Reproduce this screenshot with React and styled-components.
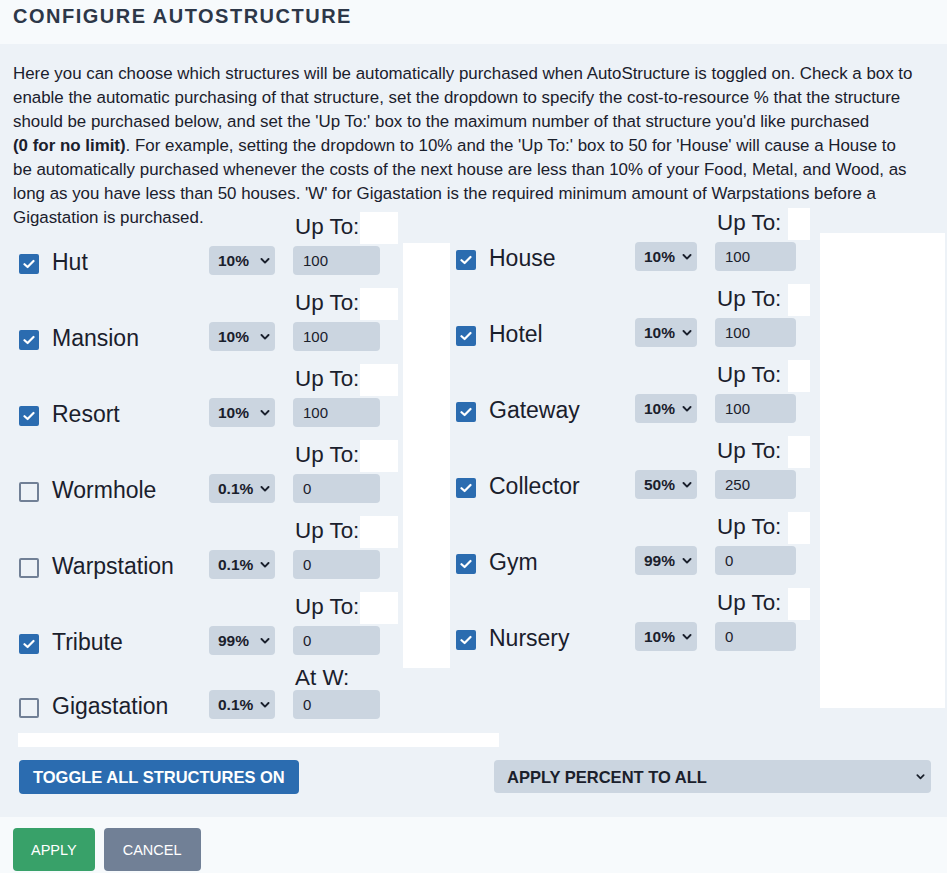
import styled, { createGlobalStyle } from "styled-components";

const GlobalStyle = createGlobalStyle`
  body {
    margin: 0;
    background: #edf2f7;
    font-family: "Liberation Sans", Arial, sans-serif;
    color: #1a202c;
  }
`;

const PERCENTS = ["0.1%", "1%", "5%", "10%", "25%", "50%", "99%"];

const LEFT = { width: 390, name: 157, select: 66, limit: 87, patchGap: 1, patchW: 38, shift: 0 };
const RIGHT = { width: 370, name: 146, select: 62, limit: 81, patchGap: 7, patchW: 22, shift: -4 };

const leftItems = [
  { name: "Hut", on: true, pct: "10%", max: "100" },
  { name: "Mansion", on: true, pct: "10%", max: "100" },
  { name: "Resort", on: true, pct: "10%", max: "100" },
  { name: "Wormhole", on: false, pct: "0.1%", max: "0" },
  { name: "Warpstation", on: false, pct: "0.1%", max: "0" },
  { name: "Tribute", on: true, pct: "99%", max: "0" },
  { name: "Gigastation", on: false, pct: "0.1%", max: "0", label: "At W:", compact: true },
];

const rightItems = [
  { name: "House", on: true, pct: "10%", max: "100" },
  { name: "Hotel", on: true, pct: "10%", max: "100" },
  { name: "Gateway", on: true, pct: "10%", max: "100" },
  { name: "Collector", on: true, pct: "50%", max: "250" },
  { name: "Gym", on: true, pct: "99%", max: "0" },
  { name: "Nursery", on: true, pct: "10%", max: "0" },
];

const Modal = styled.div`
  width: 947px;
`;

const Header = styled.h2`
  margin: 0;
  height: 44px;
  box-sizing: border-box;
  padding: 6px 13px 0;
  background: #f7fafc;
  color: #2d3748;
  font-size: 20px;
  line-height: 20px;
  font-weight: 700;
  letter-spacing: 1.5px;
  text-transform: uppercase;
`;

const Body = styled.div`
  background: #edf2f7;
  padding: 18px 2px 23px 13px;
`;

const Intro = styled.p`
  margin: 0;
  font-size: 16.9px;
  line-height: 24px;
  white-space: nowrap;
`;

const Grid = styled.div`
  display: flex;
  align-items: flex-start;
  margin-top: -18px;
`;

const Column = styled.div`
  display: flex;
  flex-direction: column;
  gap: 13px;
  flex-shrink: 0;
  box-sizing: border-box;
  width: ${({ $cfg }) => $cfg.width}px;
  padding-left: 6px;
  margin-top: ${({ $cfg }) => $cfg.shift}px;
`;

const Gutter = styled.div`
  flex-shrink: 0;
  width: 47px;
  height: 425px;
  margin-top: 31px;
  background: #fff;
`;

const BlankPane = styled.div`
  flex-shrink: 0;
  width: 125px;
  height: 475px;
  margin-top: 21px;
  background: #fff;
`;

const Item = styled.div`
  display: flex;
  align-items: flex-end;
  flex-shrink: 0;
  height: ${({ $compact }) => ($compact ? 53 : 63)}px;
  margin-top: ${({ $compact }) => ($compact ? -2 : 0)}px;
`;

const Lead = styled.label`
  display: flex;
  align-items: center;
  flex-shrink: 0;
  height: 29px;
  width: ${({ $w }) => $w + 33}px;
`;

const Box = styled.span`
  display: flex;
  align-items: center;
  justify-content: center;
  flex-shrink: 0;
  box-sizing: border-box;
  width: 20px;
  height: 20px;
  margin: 6px 13px 0 0;
  border-radius: 2px;
  background: ${({ $on }) => ($on ? "#2b6cb0" : "transparent")};
  border: 2px solid ${({ $on }) => ($on ? "#2b6cb0" : "#718096")};
`;

const Name = styled.span`
  padding-top: 3px;
  font-size: 23px;
  line-height: 29px;
  white-space: nowrap;
`;

const SelectWrap = styled.div`
  position: relative;
  flex-shrink: 0;
  width: ${({ $w }) => $w}px;
  height: ${({ $h }) => $h || 29}px;
  margin-right: ${({ $gap }) => $gap ?? 18}px;
`;

const Select = styled.select`
  appearance: none;
  width: 100%;
  height: 100%;
  box-sizing: border-box;
  border: none;
  border-radius: 4px;
  background: #cbd5e0;
  color: #1a202c;
  font-family: "Liberation Sans", Arial, sans-serif;
  font-size: ${({ $size }) => $size || 15.5}px;
  font-weight: 700;
  padding: 0 0 0 ${({ $pad }) => $pad || 9}px;
  outline: none;
`;

const Chevron = styled.svg`
  position: absolute;
  right: ${({ $right }) => $right || 5}px;
  top: 50%;
  margin-top: -3px;
  pointer-events: none;
`;

const Limit = styled.div`
  display: flex;
  flex-direction: column;
  flex-shrink: 0;
  width: ${({ $w }) => $w}px;
`;

const LimitHead = styled.div`
  display: flex;
  align-items: flex-start;
  flex-shrink: 0;
  height: ${({ $compact }) => ($compact ? 24 : 30)}px;
  margin-bottom: ${({ $compact }) => ($compact ? 0 : 4)}px;
`;

const LimitLabel = styled.span`
  padding-left: 2px;
  font-size: 22.4px;
  line-height: ${({ $compact }) => ($compact ? 24 : 30)}px;
  white-space: nowrap;
`;

const Patch = styled.span`
  flex-shrink: 0;
  height: 32px;
  width: ${({ $w }) => $w}px;
  margin-left: ${({ $gap }) => $gap}px;
  background: #fff;
`;

const Input = styled.input`
  flex-shrink: 0;
  width: 100%;
  height: 29px;
  box-sizing: border-box;
  border: none;
  border-radius: 4px;
  background: #cbd5e0;
  color: #1a202c;
  padding: 0 10px;
  font-family: "Liberation Sans", Arial, sans-serif;
  font-size: 15px;
  outline: none;
`;

const Strip = styled.div`
  width: 481px;
  height: 14px;
  margin: 14px 0 0 5px;
  background: #fff;
`;

const Actions = styled.div`
  display: flex;
  justify-content: space-between;
  align-items: flex-start;
  margin-top: 13px;
  padding: 0 14px 0 6px;
`;

const ToggleButton = styled.button`
  height: 34px;
  padding: 0 14px;
  border: none;
  border-radius: 4px;
  background: #2b6cb0;
  color: #fff;
  font-family: "Liberation Sans", Arial, sans-serif;
  font-size: 16.5px;
  font-weight: 700;
`;

const Footer = styled.div`
  display: flex;
  gap: 9px;
  height: 56px;
  box-sizing: border-box;
  padding: 11px 13px 0;
  background: #f7fafc;
`;

const FooterButton = styled.button`
  height: 43px;
  padding: 0 ${({ $pad }) => $pad}px;
  border: none;
  border-radius: 4px;
  background: ${({ $bg }) => $bg};
  color: #fff;
  font-family: "Liberation Sans", Arial, sans-serif;
  font-size: 14.5px;
`;

function Check() {
  return (
    <svg width="12" height="10" viewBox="0 0 12 10">
      <polyline points="1.5,5.2 4.6,8 10.5,2" fill="none" stroke="#fff" strokeWidth="2.2" strokeLinecap="round" strokeLinejoin="round" />
    </svg>
  );
}

function Caret({ right, size = 10 }) {
  return (
    <Chevron $right={right} width={size} height="6" viewBox="0 0 10 6">
      <polyline points="1.5,1 5,4.6 8.5,1" fill="none" stroke="#1a202c" strokeWidth="1.9" strokeLinecap="round" strokeLinejoin="round" />
    </Chevron>
  );
}

function Structure({ item, cfg }) {
  return (
    <Item $compact={item.compact}>
      <Lead $w={cfg.name}>
        <Box $on={item.on}>{item.on && <Check />}</Box>
        <Name>{item.name}</Name>
      </Lead>
      <SelectWrap $w={cfg.select}>
        <Select defaultValue={item.pct}>
          {PERCENTS.map((p) => (
            <option key={p} value={p}>{p}</option>
          ))}
        </Select>
        <Caret />
      </SelectWrap>
      <Limit $w={cfg.limit}>
        <LimitHead $compact={item.compact}>
          <LimitLabel $compact={item.compact}>{item.label || "Up To:"}</LimitLabel>
          {!item.compact && <Patch $w={cfg.patchW} $gap={cfg.patchGap} />}
        </LimitHead>
        <Input defaultValue={item.max} />
      </Limit>
    </Item>
  );
}

export default function App() {
  return (
    <Modal>
      <GlobalStyle />
      <Header>Configure AutoStructure</Header>
      <Body>
        <Intro>
          Here you can choose which structures will be automatically purchased when AutoStructure is toggled on. Check a box to
          <br />
          enable the automatic purchasing of that structure, set the dropdown to specify the cost-to-resource % that the structure
          <br />
          should be purchased below, and set the 'Up To:' box to the maximum number of that structure you'd like purchased
          <br />
          <b>(0 for no limit)</b>. For example, setting the dropdown to 10% and the 'Up To:' box to 50 for 'House' will cause a House to
          <br />
          be automatically purchased whenever the costs of the next house are less than 10% of your Food, Metal, and Wood, as
          <br />
          long as you have less than 50 houses. 'W' for Gigastation is the required minimum amount of Warpstations before a
          <br />
          Gigastation is purchased.
        </Intro>
        <Grid>
          <Column $cfg={LEFT}>
            {leftItems.map((it) => (
              <Structure key={it.name} item={it} cfg={LEFT} />
            ))}
          </Column>
          <Gutter />
          <Column $cfg={RIGHT}>
            {rightItems.map((it) => (
              <Structure key={it.name} item={it} cfg={RIGHT} />
            ))}
          </Column>
          <BlankPane />
        </Grid>
        <Strip />
        <Actions>
          <ToggleButton>TOGGLE ALL STRUCTURES ON</ToggleButton>
          <SelectWrap $w={437} $h={33} $gap={0}>
            <Select defaultValue="" $size={16.5} $pad={13}>
              <option value="">APPLY PERCENT TO ALL</option>
              {PERCENTS.map((p) => (
                <option key={p} value={p}>{p}</option>
              ))}
            </Select>
            <Caret right={6} size={9} />
          </SelectWrap>
        </Actions>
      </Body>
      <Footer>
        <FooterButton $bg="#38a169" $pad={18}>APPLY</FooterButton>
        <FooterButton $bg="#718096" $pad={19}>CANCEL</FooterButton>
      </Footer>
    </Modal>
  );
}
